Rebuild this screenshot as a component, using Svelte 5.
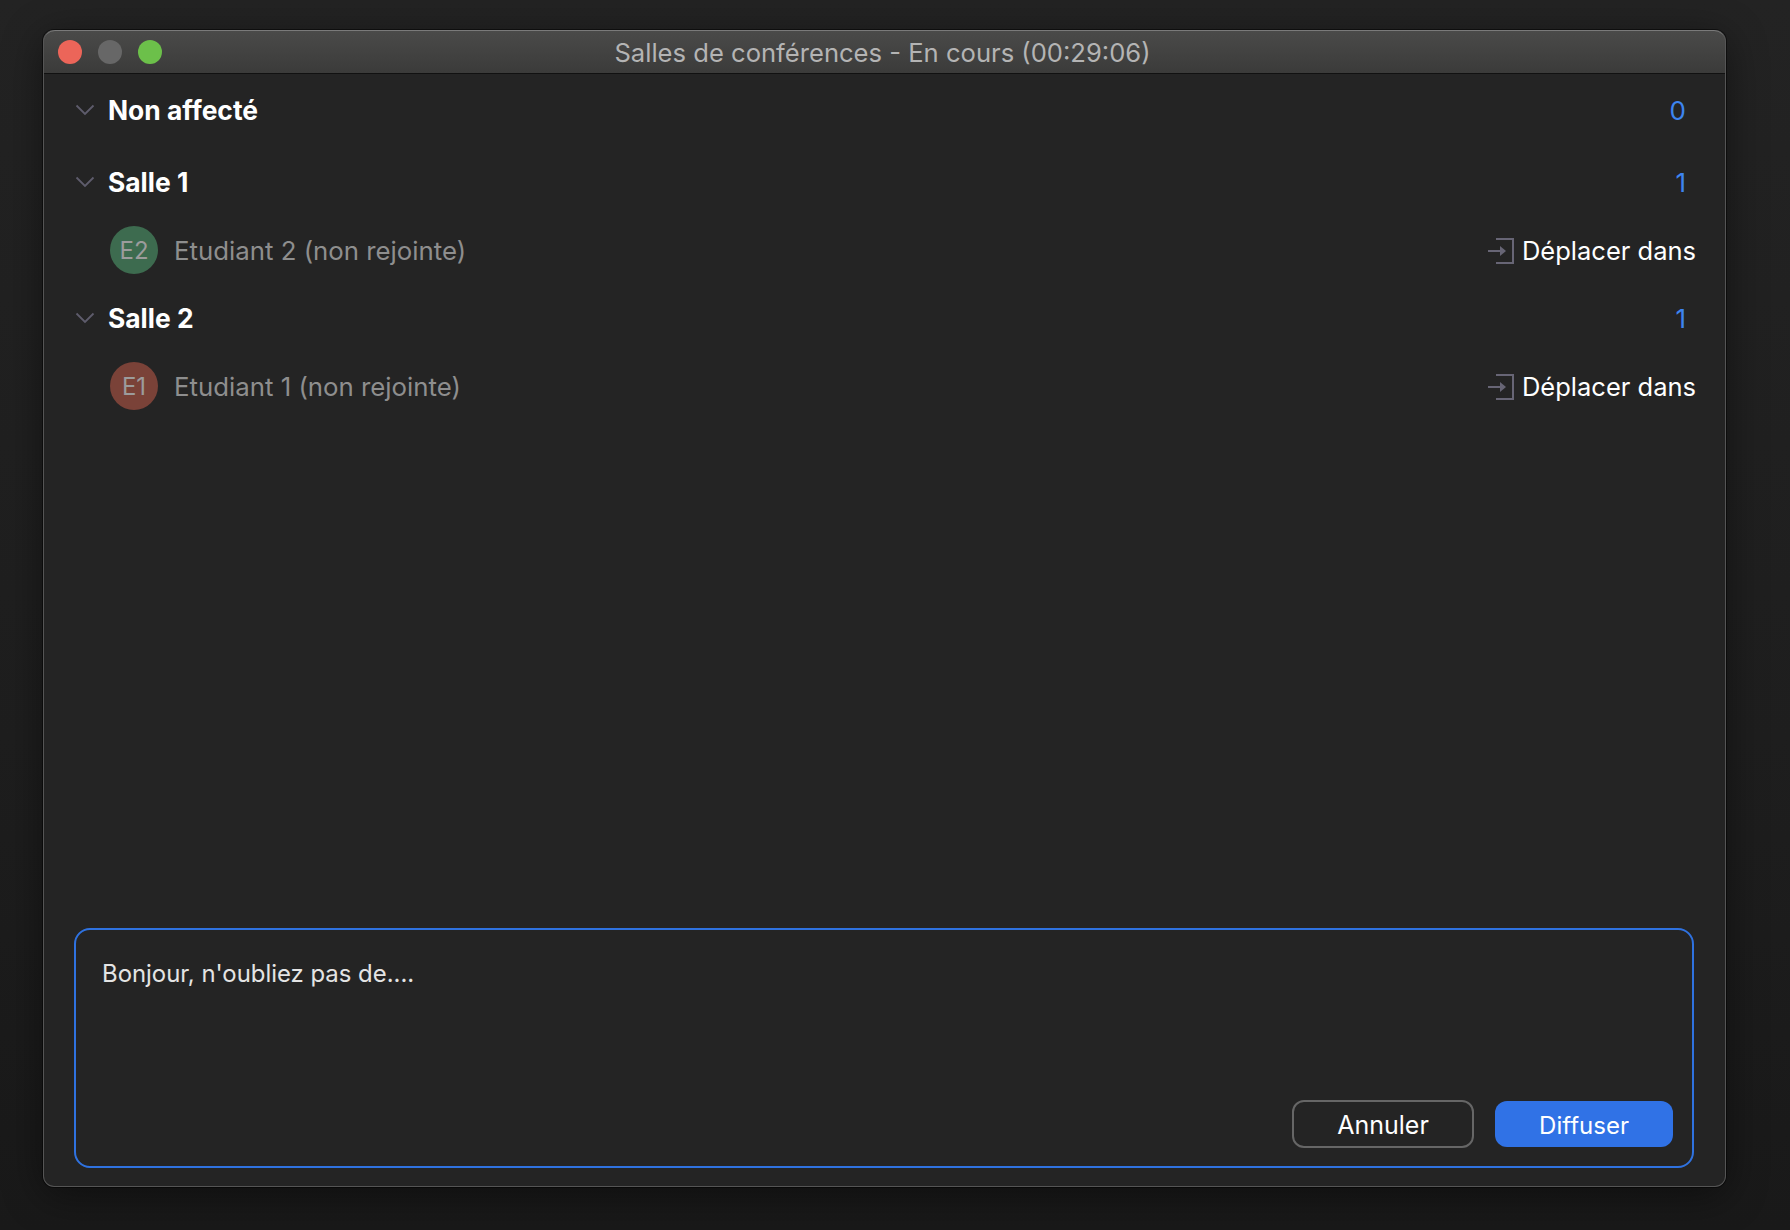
<script>
  const rooms = [
    { name: 'Non affecté', count: 0, members: [] },
    { name: 'Salle 1', count: 1, members: [{ initials: 'E2', label: 'Etudiant 2 (non rejointe)', color: '#3d6b4f' }] },
    { name: 'Salle 2', count: 1, members: [{ initials: 'E1', label: 'Etudiant 1 (non rejointe)', color: '#7a4238' }] },
  ];

  let message = 'Bonjour, n\'oubliez pas de....';
</script>

<div class="page">
  <div class="window">
    <div class="titlebar">
      <div class="lights">
        <span class="light red"></span>
        <span class="light grey"></span>
        <span class="light green"></span>
      </div>
      <div class="title">Salles de conférences - En cours (00:29:06)</div>
    </div>

    <div class="rooms">
      {#each rooms as room (room.name)}
        <div class="room-row">
          <svg class="chevron" width="20" height="12" viewBox="0 0 20 12">
            <path d="M1.5 1.5 L10 10 L18.5 1.5" fill="none" stroke="#5e5c6c" stroke-width="1.8" />
          </svg>
          <span class="room-name">{room.name}</span>
          <span class="count">{room.count}</span>
        </div>
        {#each room.members as member (member.initials)}
          <div class="member-row">
            <span class="avatar" style="background-color: {member.color}">{member.initials}</span>
            <span class="member-name">{member.label}</span>
            <button class="move">
              <svg class="move-icon" width="26" height="26" viewBox="0 0 26 26">
                <path d="M8 1 H25 V25 H8" fill="none" stroke="#676575" stroke-width="2" />
                <path d="M0 13 H17" fill="none" stroke="#676575" stroke-width="2" />
                <path d="M12 8 L18 13 L12 18 Z" fill="#676575" />
              </svg>
              <span>Déplacer dans</span>
            </button>
          </div>
        {/each}
      {/each}
    </div>

    <div class="composer">
      <div class="message">{message}</div>
      <div class="actions">
        <button class="btn cancel">Annuler</button>
        <button class="btn send">Diffuser</button>
      </div>
    </div>
  </div>
</div>

<style>
  :global(body) {
    margin: 0;
    background-color: #1f1f1f;
  }

  .page {
    height: 1230px;
    box-sizing: border-box;
    padding: 30px 64px 43px 43px;
    overflow: hidden;
    font-family: Inter, "Liberation Sans", sans-serif;
    background: linear-gradient(#232323, #1e1e1e 60%, #191919);
  }

  .window {
    height: 100%;
    box-sizing: border-box;
    display: flex;
    flex-direction: column;
    background-color: #242424;
    border: 1px solid #555;
    border-top: none;
    border-radius: 11px;
    box-shadow: 0 8px 40px rgba(0, 0, 0, 0.45), 0 0 0 1px rgba(0, 0, 0, 0.5);
  }

  .titlebar {
    position: relative;
    flex: none;
    display: flex;
    align-items: center;
    justify-content: center;
    background: linear-gradient(#4a4a49, #3b3b3a);
    border-top: 1px solid #7a7a7a;
    border-bottom: 1px solid #111;
    border-radius: 11px 11px 0 0;
    box-sizing: border-box;
    height: 44px;
  }

  .lights {
    position: absolute;
    left: 14px;
    top: 9px;
    display: flex;
    gap: 16px;
  }

  .light {
    width: 24px;
    height: 24px;
    border-radius: 50%;
  }

  .red { background-color: #ec6559; }
  .grey { background-color: #676767; }
  .green { background-color: #6cc04a; }

  .title {
    color: #b4b4b4;
    font-size: 25.6px;
    margin-right: 4px;
  }

  .rooms {
    flex: 1;
    padding-top: 2px;
    padding-left: 31px;
    padding-right: 29px;
  }

  .room-row {
    display: flex;
    align-items: center;
    height: 68px;
    margin-bottom: 4px;
  }

  .room-row ~ .room-row {
    margin-bottom: 0;
  }

  .chevron {
    margin-right: 13px;
    flex: none;
  }

  .room-name {
    color: #fff;
    font-size: 26.4px;
    font-weight: 700;
    flex: 1;
  }

  .count {
    color: #3d84f0;
    font-size: 26px;
    margin-right: 10px;
  }

  .member-row {
    display: flex;
    align-items: center;
    height: 68px;
    padding-left: 35px;
  }

  .avatar {
    width: 48px;
    height: 48px;
    border-radius: 50%;
    flex: none;
    display: flex;
    align-items: center;
    justify-content: center;
    color: #9c9c9c;
    font-size: 24px;
    margin-right: 16px;
  }

  .member-name {
    color: #8e8e8e;
    font-size: 25.8px;
    flex: 1;
  }

  .move {
    display: flex;
    align-items: center;
    gap: 8px;
    background: none;
    border: none;
    padding: 0;
    color: #fff;
    font-family: inherit;
    font-size: 25.5px;
  }

  .move-icon {
    margin-top: 2px;
  }

  .composer {
    flex: none;
    margin: 0 31px 18px 30px;
    height: 240px;
    box-sizing: border-box;
    border: 2px solid #2f72e0;
    border-radius: 16px;
    padding: 29px 19px 18px 26px;
    display: flex;
    flex-direction: column;
    justify-content: space-between;
  }

  .message {
    color: #e4e4e4;
    font-size: 23.9px;
    line-height: 30px;
  }

  .actions {
    display: flex;
    justify-content: flex-end;
    align-items: center;
    gap: 21px;
  }

  .btn {
    font-family: inherit;
    font-size: 25px;
    color: #fff;
    border-radius: 12px;
    box-sizing: border-box;
    padding: 2px 0 0;
  }

  .cancel {
    width: 182px;
    height: 48px;
    background: none;
    border: 2px solid #666;
  }

  .send {
    width: 178px;
    height: 46px;
    background-color: #3072e6;
    border: none;
    font-size: 24px;
  }
</style>
